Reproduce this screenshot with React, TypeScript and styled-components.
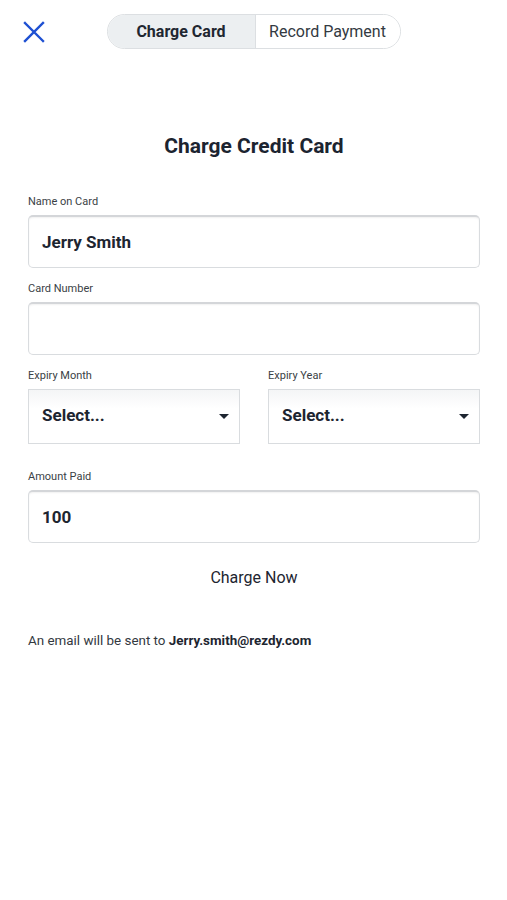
import styled, { createGlobalStyle } from "styled-components";

const GlobalStyle = createGlobalStyle`
  html, body {
    margin: 0;
    padding: 0;
    background: #ffffff;
  }
  body {
    font-family: Roboto, "Liberation Sans", Arial, sans-serif;
    color: #1d2530;
  }
`;

const Page = styled.div`
  width: 507px;
  min-height: 900px;
  background: #ffffff;
  box-sizing: border-box;
`;

const TopBar = styled.header`
  position: relative;
  height: 63px;
  display: flex;
  align-items: center;
  justify-content: center;
`;

const CloseButton = styled.button`
  position: absolute;
  left: 22px;
  top: 20px;
  width: 24px;
  height: 24px;
  padding: 0;
  border: none;
  background: none;
  display: flex;
  align-items: center;
  justify-content: center;
`;

const Segments = styled.div`
  display: flex;
  height: 35px;
  border: 1px solid #dcdfe2;
  border-radius: 18px;
  overflow: hidden;
  box-sizing: border-box;
`;

const Segment = styled.div<{ $active?: boolean }>`
  display: flex;
  align-items: center;
  justify-content: center;
  width: ${(p) => (p.$active ? "147px" : "144px")};
  background: ${(p) => (p.$active ? "#eceff1" : "#ffffff")};
  border-left: ${(p) => (p.$active ? "none" : "1px solid #dcdfe2")};
  font-size: 16px;
  font-weight: ${(p) => (p.$active ? 700 : 400)};
  color: ${(p) => (p.$active ? "#1f2731" : "#333a42")};
`;

const Form = styled.main`
  padding: 66px 27px 0 28px;
  display: flex;
  flex-direction: column;
`;

const Title = styled.h1`
  margin: 0 0 32px;
  text-align: center;
  font-size: 21px;
  font-weight: 700;
  color: #1c2430;
  line-height: 34px;
`;

const Field = styled.div`
  display: flex;
  flex-direction: column;
  margin-bottom: 14px;
  min-width: 0;
`;

const Label = styled.label`
  font-size: 11px;
  color: #3a3f45;
  line-height: 14px;
  margin-bottom: 6px;
`;

const TextBox = styled.div`
  height: 53px;
  box-sizing: border-box;
  border: 1px solid #d9dcdf;
  border-top: 2px solid #d4d6d9;
  border-radius: 5px;
  box-shadow: inset 0 1px 2px rgba(0, 0, 0, 0.06);
  display: flex;
  align-items: center;
  padding: 0 13px;
  font-size: 17px;
  font-weight: 700;
  color: #1d2530;
`;

const Row = styled.div`
  display: grid;
  grid-template-columns: 212px 212px;
  column-gap: 28px;
  margin-bottom: 12px;
`;

const SelectBox = styled.div`
  height: 55px;
  box-sizing: border-box;
  border: 1px solid #d9dcdf;
  background: linear-gradient(#f4f5f6, #ffffff 35%);
  display: flex;
  align-items: center;
  justify-content: space-between;
  padding: 0 10px 3px 13px;
  font-size: 17px;
  font-weight: 700;
  color: #1d2530;
`;

const Caret = styled.span`
  width: 0;
  height: 0;
  margin-top: 2px;
  border-left: 5px solid transparent;
  border-right: 5px solid transparent;
  border-top: 5px solid #1d2530;
`;

const ChargeButton = styled.button`
  align-self: center;
  margin-top: 5px;
  border: none;
  background: none;
  font-family: inherit;
  font-size: 16px;
  color: #1d2530;
  padding: 6px 12px;
`;

const Note = styled.p`
  margin: 40px 0 0;
  font-size: 13.4px;
  color: #33393f;

  strong {
    font-weight: 700;
    color: #1d2530;
  }
`;

function App() {
  return (
    <Page>
      <GlobalStyle />
      <TopBar>
        <CloseButton aria-label="Close">
          <svg width="22" height="22" viewBox="0 0 22 22">
            <path
              d="M2 2 L20 20 M20 2 L2 20"
              stroke="#1e50d2"
              strokeWidth="2.4"
              strokeLinecap="square"
            />
          </svg>
        </CloseButton>
        <Segments>
          <Segment $active>Charge Card</Segment>
          <Segment>Record Payment</Segment>
        </Segments>
      </TopBar>
      <Form>
        <Title>Charge Credit Card</Title>
        <Field>
          <Label>Name on Card</Label>
          <TextBox>Jerry Smith</TextBox>
        </Field>
        <Field>
          <Label>Card Number</Label>
          <TextBox />
        </Field>
        <Row>
          <Field>
            <Label>Expiry Month</Label>
            <SelectBox>
              Select...
              <Caret />
            </SelectBox>
          </Field>
          <Field>
            <Label>Expiry Year</Label>
            <SelectBox>
              Select...
              <Caret />
            </SelectBox>
          </Field>
        </Row>
        <Field>
          <Label>Amount Paid</Label>
          <TextBox>100</TextBox>
        </Field>
        <ChargeButton>Charge Now</ChargeButton>
        <Note>
          An email will be sent to <strong>Jerry.smith@rezdy.com</strong>
        </Note>
      </Form>
    </Page>
  );
}

export default App;
